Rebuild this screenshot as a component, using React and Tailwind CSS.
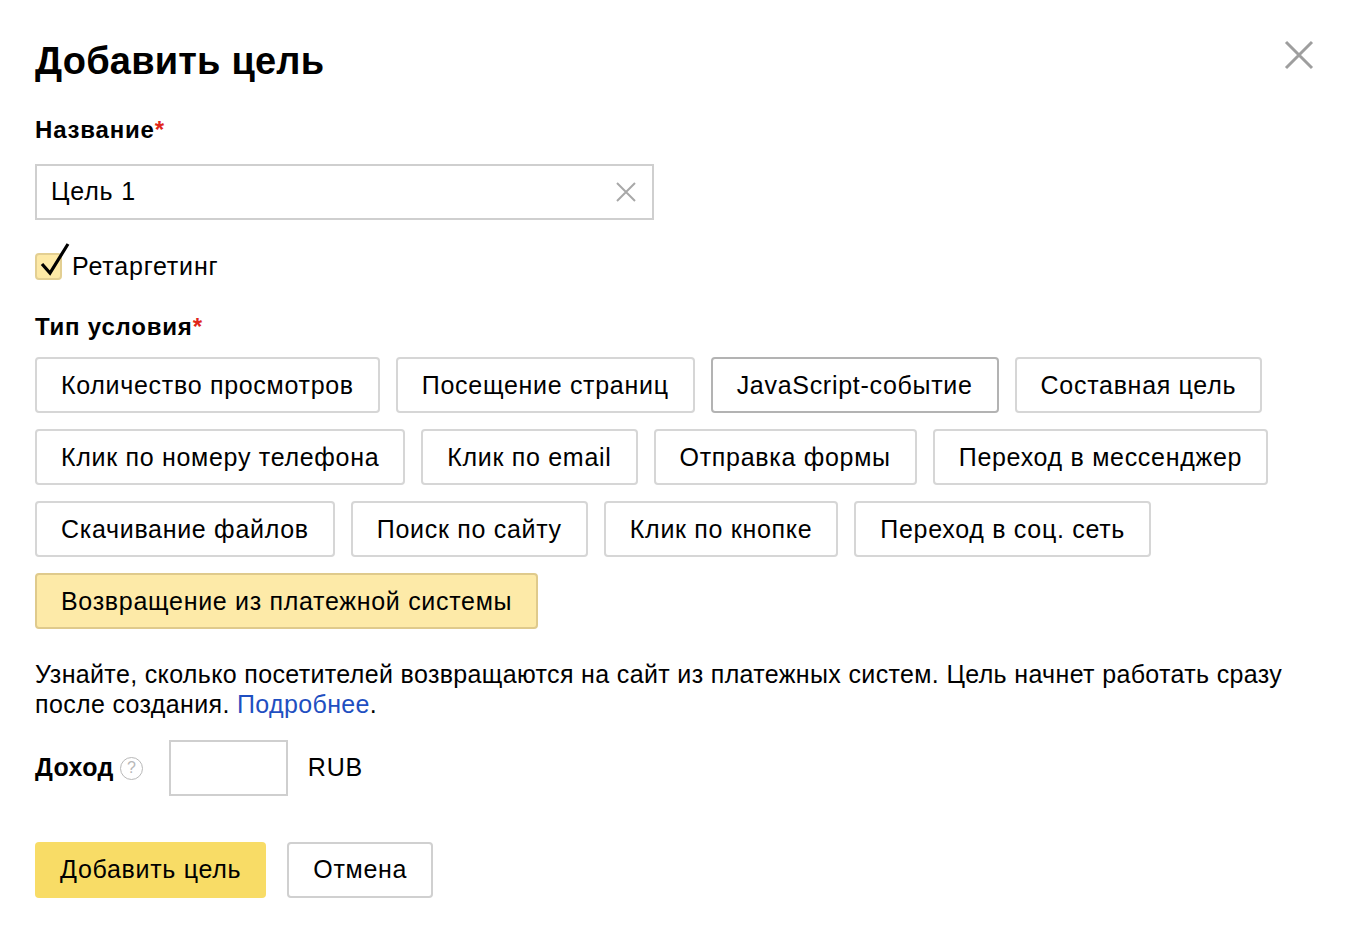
import { useState } from "react";

const types = [
  ["Количество просмотров", "Посещение страниц", "JavaScript-событие", "Составная цель"],
  ["Клик по номеру телефона", "Клик по email", "Отправка формы", "Переход в мессенджер"],
  ["Скачивание файлов", "Поиск по сайту", "Клик по кнопке", "Переход в соц. сеть"],
  ["Возвращение из платежной системы"],
];

function TypeButton({ label, selected, hover }) {
  let cls = "h-[56px] px-[24px] rounded-[4px] border-2 text-[25px] tracking-[0.7px] leading-none text-black ";
  if (selected) cls += "bg-[#fdeaa8] border-[#dfca8c]";
  else if (hover) cls += "bg-white border-[#b3b3b3]";
  else cls += "bg-white border-[#d6d6d6]";
  return <button className={cls}>{label}</button>;
}

export default function App() {
  const [name, setName] = useState("Цель 1");
  const [selected] = useState("Возвращение из платежной системы");

  return (
    <div className="min-h-screen bg-white font-['Liberation_Sans',Arial,sans-serif] text-black px-[35px] pt-[38px] relative">
      <button className="absolute right-[40px] top-[40px] w-[30px] h-[30px]">
        <svg viewBox="0 0 30 30" width="30" height="30">
          <path d="M2 2 L28 28 M28 2 L2 28" stroke="#9e9e9e" strokeWidth="3" />
        </svg>
      </button>

      <h1 className="text-[38px] font-bold leading-[46px] tracking-[0.2px]">Добавить цель</h1>

      <div className="mt-[32px] text-[24px] font-bold leading-[28px] tracking-[0.8px]">
        Название<span className="text-[#e0261a]">*</span>
      </div>

      <div className="mt-[20px] w-[619px] h-[56px] border-2 border-[#cfcfcf] flex items-center pl-[14px] pr-[16px]">
        <input
          value={name}
          onChange={(e) => setName(e.target.value)}
          className="flex-1 outline-none text-[25px] tracking-[0.8px] bg-transparent"
        />
        <svg viewBox="0 0 20 20" width="20" height="20">
          <path d="M1 1 L19 19 M19 1 L1 19" stroke="#a8a8a8" strokeWidth="2" />
        </svg>
      </div>

      <label className="mt-[32px] flex items-center gap-[10px] h-[28px]">
        <span className="relative w-[27px] h-[27px] rounded-[4px] bg-[#fde9a6] border-2 border-[#e3cf92] shrink-0">
          <svg viewBox="0 0 32 36" width="32" height="36" className="absolute left-[2px] top-[-13px]">
            <path d="M3 22 L11 31 L29 2" stroke="#000" strokeWidth="3.2" fill="none" />
          </svg>
        </span>
        <span className="text-[25px] tracking-[0.8px] leading-none">Ретаргетинг</span>
      </label>

      <div className="mt-[33px] text-[24px] font-bold leading-[28px] tracking-[0.8px]">
        Тип условия<span className="text-[#e0261a]">*</span>
      </div>

      <div className="mt-[16px] flex flex-col gap-[16px]">
        {types.map((row, i) => (
          <div key={i} className="flex gap-[16px]">
            {row.map((t) => (
              <TypeButton key={t} label={t} selected={t === selected} hover={t === "JavaScript-событие"} />
            ))}
          </div>
        ))}
      </div>

      <p className="mt-[30px] text-[25px] leading-[30px] max-w-[1275px] tracking-[0.35px]">
        Узнайте, сколько посетителей возвращаются на сайт из платежных систем. Цель начнет работать сразу после создания.{" "}
        <a href="#" className="text-[#1f4fc1]">Подробнее</a>.
      </p>

      <div className="mt-[21px] flex items-center h-[56px]">
        <span className="text-[25px] font-bold tracking-[0.4px]">Доход</span>
        <span className="ml-[6px] w-[23px] h-[23px] rounded-full border border-[#b8b8b8] text-[#b8b8b8] text-[16px] flex items-center justify-center">?</span>
        <input className="ml-[26px] w-[119px] h-[56px] border-2 border-[#cfcfcf] outline-none text-[25px] px-[10px]" />
        <span className="ml-[20px] text-[25px] tracking-[0.8px]">RUB</span>
      </div>

      <div className="mt-[46px] flex gap-[21px]">
        <button className="h-[56px] px-[25px] rounded-[4px] bg-[#f8dc66] text-[25px] tracking-[0.7px]">Добавить цель</button>
        <button className="h-[56px] px-[24px] rounded-[4px] border-2 border-[#d0d0d0] bg-white text-[25px] tracking-[0.7px]">Отмена</button>
      </div>
    </div>
  );
}
